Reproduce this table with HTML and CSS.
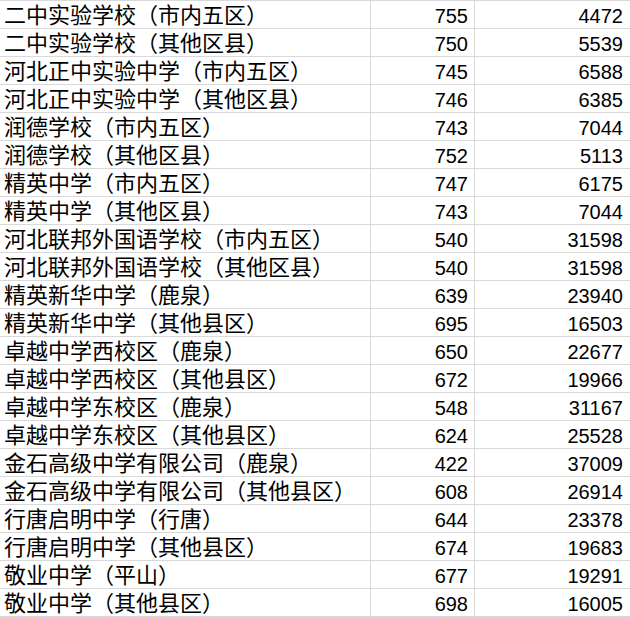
FILE: index.html
```html
<!DOCTYPE html>
<html lang="zh-CN">
<head>
<meta charset="utf-8">
<title>学校分数线</title>
<link rel="stylesheet" href="styles.css">
</head>
<body>
<div class="sheet">
  <div class="row"><div class="c name">二中实验学校（市内五区<span class="cp">）</span></div><div class="c num">755</div><div class="c num last">4472</div></div>
  <div class="row"><div class="c name">二中实验学校（其他区县<span class="cp">）</span></div><div class="c num">750</div><div class="c num last">5539</div></div>
  <div class="row"><div class="c name">河北正中实验中学（市内五区<span class="cp">）</span></div><div class="c num">745</div><div class="c num last">6588</div></div>
  <div class="row"><div class="c name">河北正中实验中学（其他区县<span class="cp">）</span></div><div class="c num">746</div><div class="c num last">6385</div></div>
  <div class="row"><div class="c name">润德学校（市内五区<span class="cp">）</span></div><div class="c num">743</div><div class="c num last">7044</div></div>
  <div class="row"><div class="c name">润德学校（其他区县<span class="cp">）</span></div><div class="c num">752</div><div class="c num last">5113</div></div>
  <div class="row"><div class="c name">精英中学（市内五区<span class="cp">）</span></div><div class="c num">747</div><div class="c num last">6175</div></div>
  <div class="row"><div class="c name">精英中学（其他区县<span class="cp">）</span></div><div class="c num">743</div><div class="c num last">7044</div></div>
  <div class="row"><div class="c name">河北联邦外国语学校（市内五区<span class="cp">）</span></div><div class="c num">540</div><div class="c num last">31598</div></div>
  <div class="row"><div class="c name">河北联邦外国语学校（其他区县<span class="cp">）</span></div><div class="c num">540</div><div class="c num last">31598</div></div>
  <div class="row"><div class="c name">精英新华中学（鹿泉<span class="cp">）</span></div><div class="c num">639</div><div class="c num last">23940</div></div>
  <div class="row"><div class="c name">精英新华中学（其他县区<span class="cp">）</span></div><div class="c num">695</div><div class="c num last">16503</div></div>
  <div class="row"><div class="c name">卓越中学西校区（鹿泉<span class="cp">）</span></div><div class="c num">650</div><div class="c num last">22677</div></div>
  <div class="row"><div class="c name">卓越中学西校区（其他县区<span class="cp">）</span></div><div class="c num">672</div><div class="c num last">19966</div></div>
  <div class="row"><div class="c name">卓越中学东校区（鹿泉<span class="cp">）</span></div><div class="c num">548</div><div class="c num last">31167</div></div>
  <div class="row"><div class="c name">卓越中学东校区（其他县区<span class="cp">）</span></div><div class="c num">624</div><div class="c num last">25528</div></div>
  <div class="row"><div class="c name">金石高级中学有限公司（鹿泉<span class="cp">）</span></div><div class="c num">422</div><div class="c num last">37009</div></div>
  <div class="row"><div class="c name">金石高级中学有限公司（其他县区<span class="cp">）</span></div><div class="c num">608</div><div class="c num last">26914</div></div>
  <div class="row"><div class="c name">行唐启明中学（行唐<span class="cp">）</span></div><div class="c num">644</div><div class="c num last">23378</div></div>
  <div class="row"><div class="c name">行唐启明中学（其他县区<span class="cp">）</span></div><div class="c num">674</div><div class="c num last">19683</div></div>
  <div class="row"><div class="c name">敬业中学（平山<span class="cp">）</span></div><div class="c num">677</div><div class="c num last">19291</div></div>
  <div class="row"><div class="c name">敬业中学（其他县区<span class="cp">）</span></div><div class="c num">698</div><div class="c num last">16005</div></div>
</div>
</body>
</html>
```

FILE: styles.css
```css
html, body {
  margin: 0;
  padding: 0;
  background: #ffffff;
}
.sheet {
  width: 630px;
  border-top: 1px solid #d9d9d9;
  color: #000000;
}
.row {
  display: grid;
  grid-template-columns: 371px 104px 1fr;
  height: 28px;
}
.c {
  box-sizing: border-box;
  height: 28px;
  border-right: 1px solid #d9d9d9;
  border-bottom: 1px solid #d9d9d9;
  white-space: nowrap;
}
.name {
  font-family: "Liberation Sans", "Noto Sans CJK SC", sans-serif;
  font-size: 22px;
  line-height: 29px;
  padding-left: 4px;
}
.cp {
  font-feature-settings: "halt" 1;
}
.num {
  font-family: "Liberation Sans", Arial, sans-serif;
  font-size: 20px;
  line-height: 30px;
  text-align: right;
  padding-right: 6px;
}
.last {
  border-right: none;
  padding-right: 7px;
}
```
